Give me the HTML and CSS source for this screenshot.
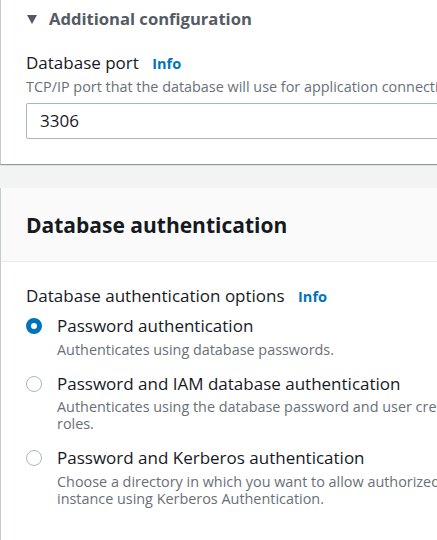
FILE: index.html
```html
<!DOCTYPE html>
<html>
<head>
<meta charset="utf-8">
<link rel="stylesheet" href="styles.css">
</head>
<body>
<div class="page">
  <section class="card card-top">
    <div class="expand">
      <span class="caret"></span>
      <span class="expand-title">Additional configuration</span>
    </div>
    <div class="field">
      <div class="label">Database port <a class="info">Info</a></div>
      <div class="desc">TCP/IP port that the database will use for application connections.</div>
      <div class="input">3306</div>
    </div>
  </section>

  <section class="card card-auth">
    <header class="card-header">
      <h2>Database authentication</h2>
    </header>
    <div class="card-body">
      <div class="label">Database authentication options <a class="info">Info</a></div>
      <div class="radios">
        <div class="radio-row">
          <span class="radio checked"></span>
          <div class="radio-text">
            <div class="radio-label">Password authentication</div>
            <div class="radio-desc">Authenticates using database passwords.</div>
          </div>
        </div>
        <div class="radio-row">
          <span class="radio"></span>
          <div class="radio-text">
            <div class="radio-label">Password and IAM database authentication</div>
            <div class="radio-desc">Authenticates using the database password and user credentials through AWS IAM users and<br>roles.</div>
          </div>
        </div>
        <div class="radio-row">
          <span class="radio"></span>
          <div class="radio-text">
            <div class="radio-label">Password and Kerberos authentication</div>
            <div class="radio-desc">Choose a directory in which you want to allow authorized users to authenticate with this DB<br>instance using Kerberos Authentication.</div>
          </div>
        </div>
      </div>
    </div>
  </section>
</div>
</body>
</html>
```

FILE: styles.css
```css
html, body {
  margin: 0;
  padding: 0;
  background: #f2f3f3;
  overflow: hidden;
}
body {
  width: 437px;
  height: 540px;
  font-family: "Open Sans", "Noto Sans", sans-serif;
  color: #16191f;
}
.page {
  width: 437px;
  height: 540px;
  display: flex;
  flex-direction: column;
  gap: 24px;
  overflow: hidden;
}
.card {
  flex: none;
  width: 700px;
  box-sizing: border-box;
  background: #ffffff;
  border-left: 1px solid #c6cccc;
  box-shadow: 0 1px 1px 0 rgba(0, 28, 36, 0.3), 1px 1px 1px 0 rgba(0, 28, 36, 0.15);
}
.card-top {
  padding: 8px 0 25px 25px;
}
.expand {
  display: flex;
  align-items: center;
  gap: 12px;
  height: 22px;
  color: #545b64;
}
.caret {
  width: 0;
  height: 0;
  margin-left: 1px;
  border-left: 5.5px solid transparent;
  border-right: 5.5px solid transparent;
  border-top: 9px solid #545b64;
}
.expand-title {
  font-size: 16.6px;
  font-weight: 700;
  line-height: 22px;
}
.field {
  margin-top: 21px;
}
.label {
  font-size: 17px;
  line-height: 24px;
  white-space: nowrap;
}
.info {
  font-size: 14.5px;
  font-weight: 700;
  color: #0073bb;
  margin-left: 9px;
}
.desc {
  margin-top: 2px;
  font-size: 14.4px;
  line-height: 18px;
  color: #687078;
  white-space: nowrap;
}
.input {
  margin-top: 7px;
  height: 34px;
  border: 1px solid #aab7b8;
  border-radius: 2px;
  padding-left: 13px;
  font-size: 17px;
  line-height: 34px;
}
.card-auth {
  flex: 1;
}
.card-header {
  background: #fafafa;
  height: 73px;
  border-bottom: 1px solid #eaeded;
  padding-left: 25px;
  display: flex;
  align-items: center;
}
.card-header h2 {
  margin: 0;
  font-size: 21px;
  font-weight: 700;
  line-height: 26px;
}
.card-body {
  padding: 22px 0 0 25px;
}
.radios {
  margin-top: 5px;
  display: flex;
  flex-direction: column;
  gap: 14px;
}
.radio-row {
  display: flex;
  gap: 15px;
}
.radio {
  flex: none;
  box-sizing: border-box;
  width: 16px;
  height: 16px;
  margin-top: 4px;
  border-radius: 50%;
  border: 1.5px solid #aab7b8;
  background: #fff;
}
.radio.checked {
  border: 5px solid #0073bb;
}
.radio-label {
  font-size: 17px;
  line-height: 24px;
  white-space: nowrap;
}
.radio-desc {
  margin-top: 2.5px;
  font-size: 14.4px;
  line-height: 17px;
  color: #687078;
  white-space: nowrap;
}
```
